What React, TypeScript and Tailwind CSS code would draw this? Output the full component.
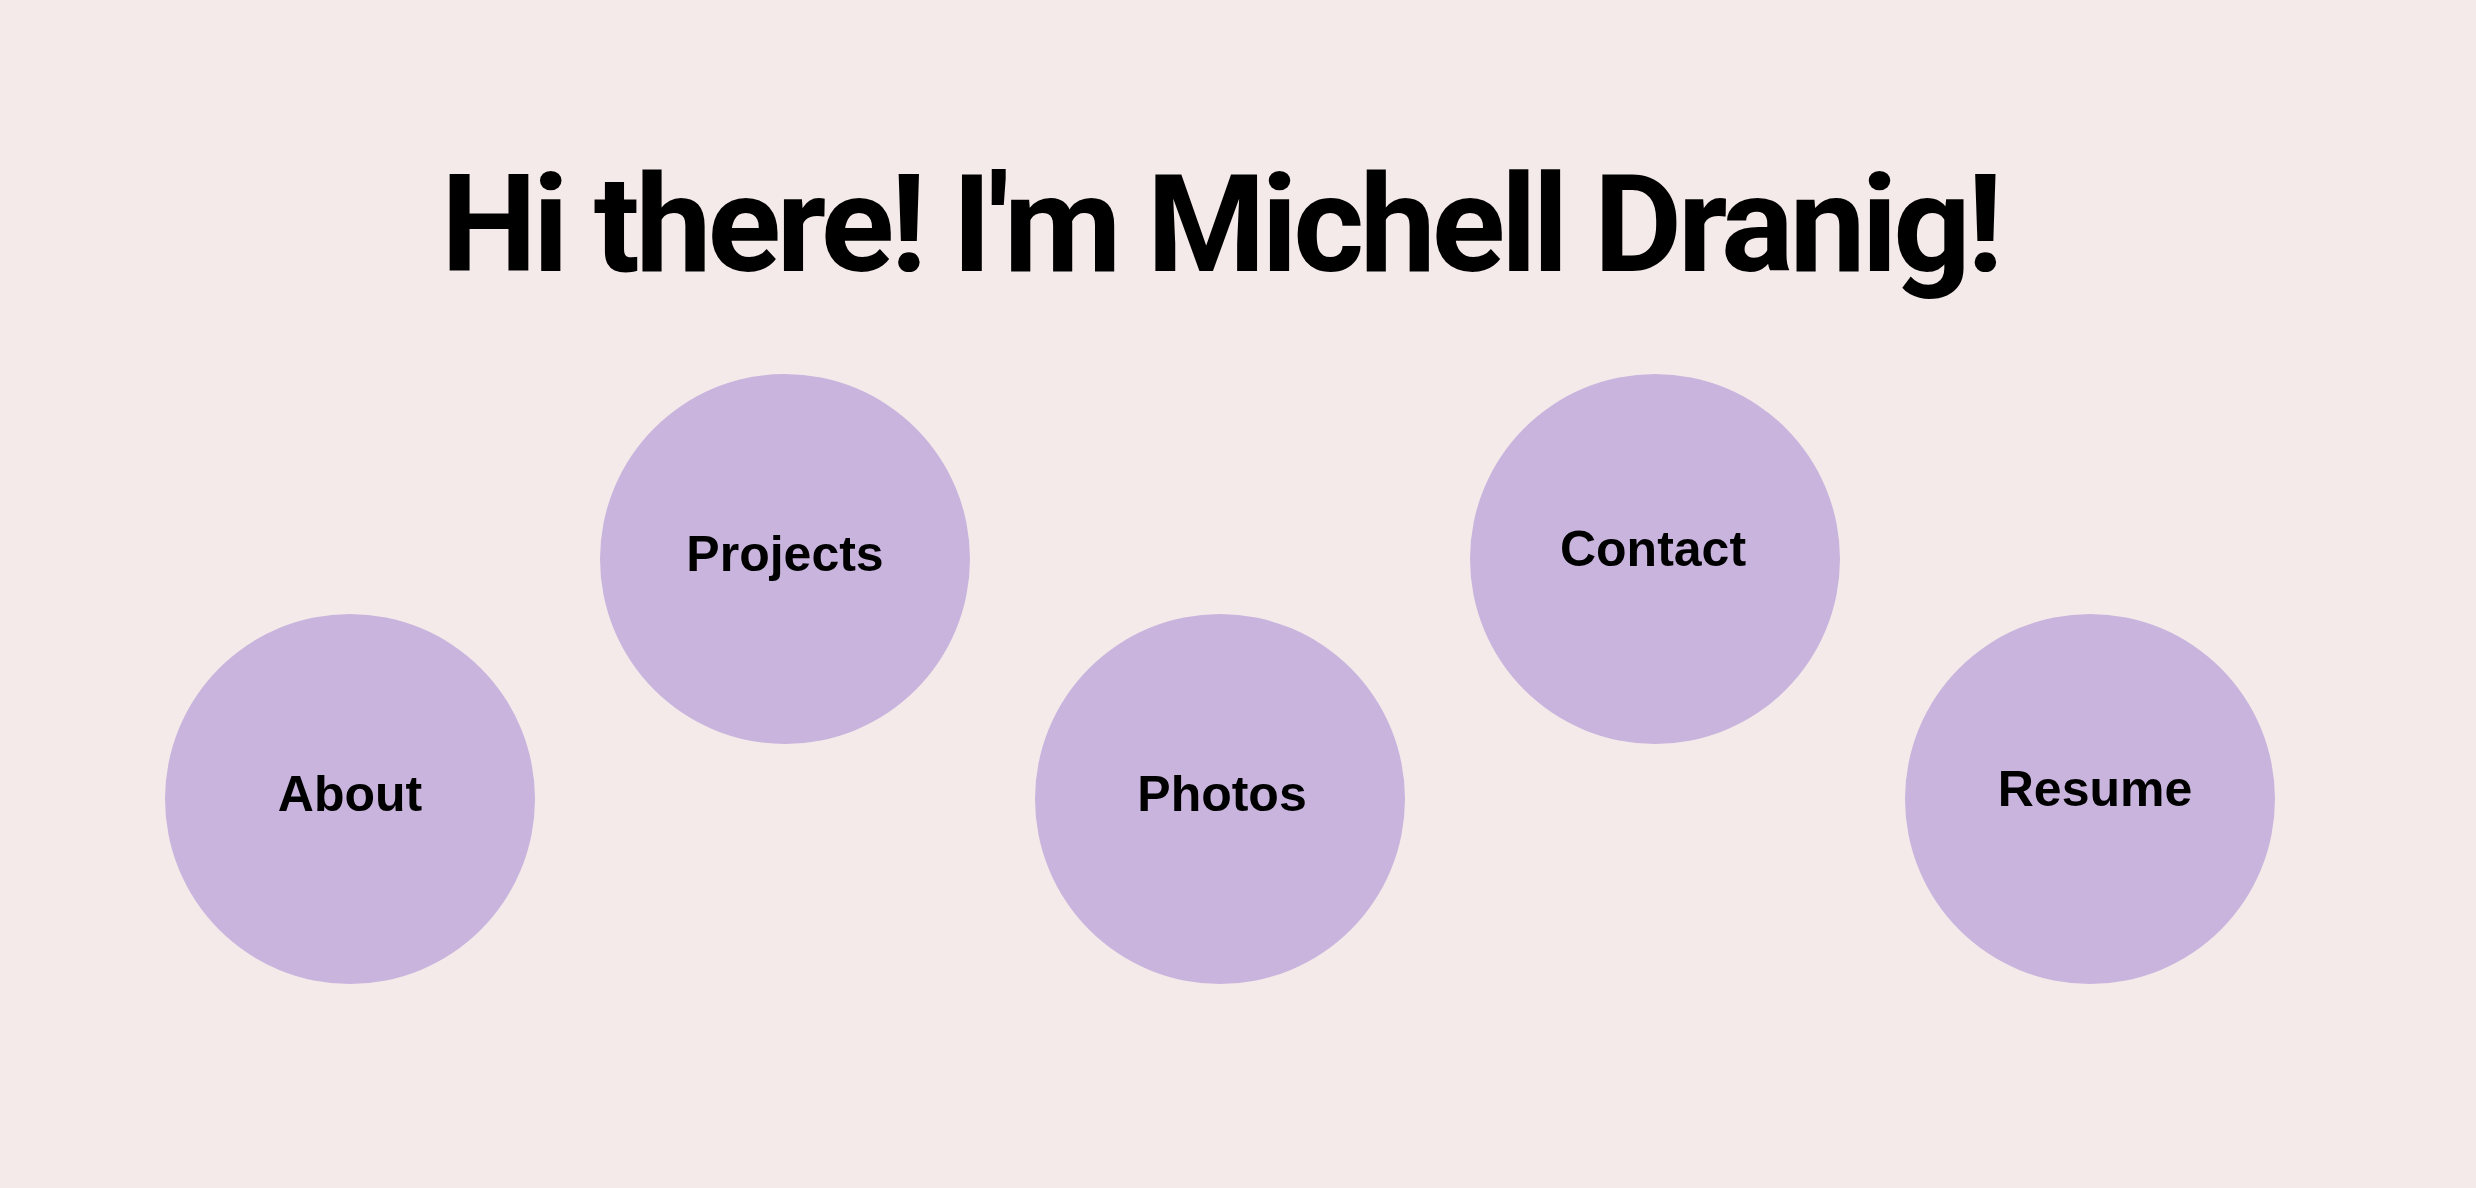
import React from 'react';

const links = [
  { label: 'About', raised: false, nudge: 'pb-[10px]' },
  { label: 'Projects', raised: true, nudge: 'pb-[9px]' },
  { label: 'Photos', raised: false, nudge: 'pb-[10px] pl-[4px]' },
  { label: 'Contact', raised: true, nudge: 'pb-[19px] pr-[4px]' },
  { label: 'Resume', raised: false, nudge: 'pb-[19px] pl-[10px]' },
];

const App: React.FC = () => {
  return (
    <div className="min-h-[1188px] w-full bg-[#f4eae9] pr-[36px]">
      <h1 className="pt-[123px] text-center text-[136px] font-bold leading-normal tracking-[-4.3px] text-black [font-family:Roboto,'Liberation_Sans',sans-serif]">
        Hi there! I'm Michell Dranig!
      </h1>
      <div className="mt-[47px] flex items-start justify-center gap-[65px]">
        {links.map((link) => (
          <a
            key={link.label}
            href="#"
            className={`flex h-[370px] w-[370px] shrink-0 items-center justify-center rounded-full bg-[#c9b4de] ${
              link.raised ? 'mt-0' : 'mt-[240px]'
            }`}
          >
            <span
              className={`text-[50px] font-bold leading-normal text-black [font-family:'Liberation_Sans',Arial,sans-serif] ${link.nudge}`}
            >
              {link.label}
            </span>
          </a>
        ))}
      </div>
    </div>
  );
};

export default App;
